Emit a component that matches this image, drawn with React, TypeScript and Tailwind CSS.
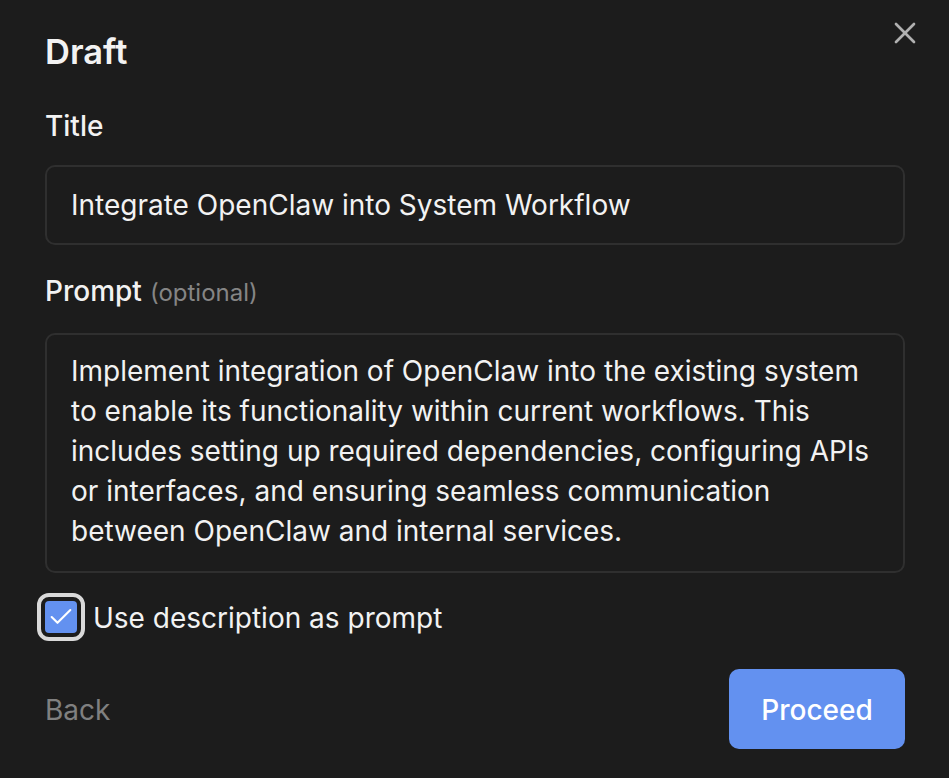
import { useState } from 'react'
import { X, Check } from 'lucide-react'

const PROMPT =
  'Implement integration of OpenClaw into the existing system to enable its functionality within current workflows. This includes setting up required dependencies, configuring APIs or interfaces, and ensuring seamless communication between OpenClaw and internal services.'

export default function App() {
  const [useDescription, setUseDescription] = useState(true)

  return (
    <div className="relative h-[778px] w-[949px] overflow-hidden bg-[#1c1c1c] pl-[45px] pr-[44px] pt-[30px] font-['Inter',sans-serif] text-[28px] text-[#f2f2f2]">
      <button className="absolute right-[26px] top-[15px] text-[#b0b0b0]">
        <X size={36} strokeWidth={1.8} />
      </button>

      <h2 className="h-[44px] text-[34.5px] font-semibold leading-[44px]">Draft</h2>

      <label className="mt-[32px] block font-medium leading-[40px]">Title</label>
      <div className="mt-[19px] flex h-[80px] items-center rounded-[10px] border-2 border-[#2f2f2f] px-[24px] leading-[40px]">
        Integrate OpenClaw into System Workflow
      </div>

      <label className="mt-[26px] flex h-[40px] items-baseline gap-[8px] font-medium leading-[40px]">
        Prompt <span className="text-[24px] font-normal text-[#858585]">(optional)</span>
      </label>
      <div className="mt-[22px] h-[240px] rounded-[10px] border-2 border-[#2f2f2f] px-[24px] py-[16px] leading-[40px]">
        {PROMPT}
      </div>

      <label className="mt-[20px] flex h-[48px] items-center gap-[8px] leading-[40px]">
        <button
          onClick={() => setUseDescription(!useDescription)}
          className="ml-[-8px] flex h-[48px] w-[48px] items-center justify-center rounded-[12px] border-[4px] border-[#d9d9d9] bg-[#1c1c1c]"
        >
          <span className="flex h-[32px] w-[32px] items-center justify-center rounded-[4px] bg-[#6391f0]">
            {useDescription && <Check size={28} strokeWidth={1.8} className="text-white" />}
          </span>
        </button>
        <span className="pt-[1px]">Use description as prompt</span>
      </label>

      <div className="mt-[28px] flex items-center justify-between">
        <button className="pt-[1px] leading-[40px] text-[#808080]">Back</button>
        <button className="flex h-[80px] w-[176px] items-center justify-center rounded-[10px] bg-[#6391f0] pt-[1px] font-medium text-white">
          Proceed
        </button>
      </div>
    </div>
  )
}
